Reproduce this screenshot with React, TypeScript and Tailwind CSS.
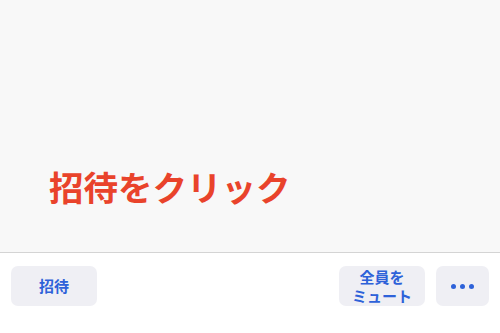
const font = { fontFamily: '"Noto Sans CJK JP", "Noto Sans", sans-serif' };

const App = () => {
  return (
    <div className="h-[333px] w-[500px] flex flex-col bg-white overflow-hidden" style={font}>
      <div className="h-[253px] bg-[#f8f8f8] border-b border-[#d4d4d4] flex flex-col justify-end pb-[45px] pl-[49px]">
        <span className="text-[34.5px] leading-[42px] font-semibold text-[#e9432b]">招待をクリック</span>
      </div>
      <div className="flex items-start pt-[13px] px-[11px] gap-[11px]">
        <button className="w-[86px] h-[40px] rounded-[7px] bg-[#efeff4] text-[#2e62d9] text-[15px] font-semibold">招待</button>
        <div className="flex-1" />
        <button className="w-[86px] h-[40px] rounded-[7px] bg-[#efeff4] text-[#2e62d9] text-[15px] leading-[19px] font-semibold flex flex-col items-center justify-center">
          <span>全員を</span>
          <span>ミュート</span>
        </button>
        <button className="w-[53px] h-[40px] rounded-[7px] bg-[#efeff4] flex items-center justify-center gap-[4px]">
          <span className="w-[5px] h-[5px] rounded-full bg-[#2e62d9]" />
          <span className="w-[5px] h-[5px] rounded-full bg-[#2e62d9]" />
          <span className="w-[5px] h-[5px] rounded-full bg-[#2e62d9]" />
        </button>
      </div>
    </div>
  );
};

export default App;
